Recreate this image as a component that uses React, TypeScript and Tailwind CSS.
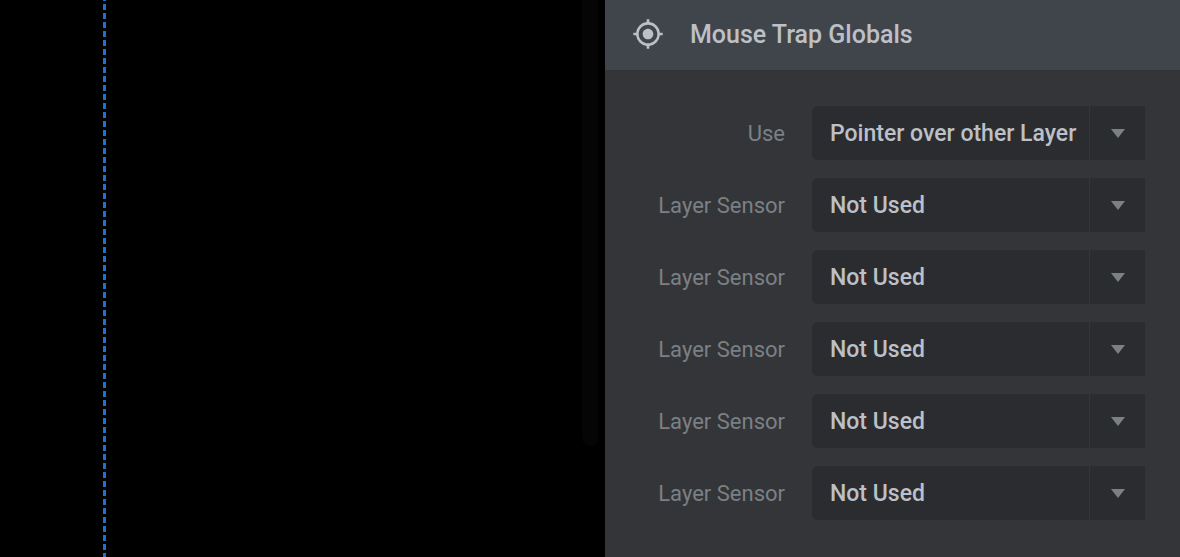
import { useState } from 'react';
import { MdMyLocation } from 'react-icons/md';

type SelectFieldProps = {
  id: string;
  label: string;
  options: string[];
};

const sources = ['Pointer over other Layer', 'Pointer over Slide', 'Events'];
const layers = ['Not Used', 'Layer 1', 'Layer 2', 'Layer 3'];

const fields: SelectFieldProps[] = [
  { id: 'use', label: 'Use', options: sources },
  { id: 'sensor-1', label: 'Layer Sensor', options: layers },
  { id: 'sensor-2', label: 'Layer Sensor', options: layers },
  { id: 'sensor-3', label: 'Layer Sensor', options: layers },
  { id: 'sensor-4', label: 'Layer Sensor', options: layers },
  { id: 'sensor-5', label: 'Layer Sensor', options: layers },
];

const SelectField = ({ id, label, options }: SelectFieldProps) => {
  const [value, setValue] = useState(options[0]);

  return (
    <div className="flex items-center gap-[27px]">
      <label htmlFor={id} className="flex-1 pt-0.5 text-right text-[22px] leading-8 text-[#7b8085]">
        {label}
      </label>
      <div className="relative w-[333px]">
        <select
          id={id}
          value={value}
          onChange={(event) => setValue(event.target.value)}
          className="block h-[54px] w-full appearance-none rounded-l-md bg-[#2b2c30] pt-0.5 pl-[18px] text-[23px] font-medium text-[#bdc0c7] outline-none"
        >
          {options.map((option) => (
            <option key={option}>{option}</option>
          ))}
        </select>
        <span className="pointer-events-none absolute inset-y-0 right-0 flex w-14 items-center justify-center border-l border-[#34353a]">
          <svg viewBox="0 0 14 9" className="h-[9px] w-3.5 fill-[#7b8084]" aria-hidden="true">
            <path d="M0 0h14L7 9z" />
          </svg>
        </span>
      </div>
    </div>
  );
};

const Canvas = () => (
  <main className="flex flex-1 justify-between bg-black pr-[7px] pl-[103px]">
    {/* vertical guide */}
    <div className="w-[3px] bg-[repeating-linear-gradient(to_bottom,#1d72d8_0px,#1d72d8_1px,transparent_1px,transparent_4px,#1d72d8_4px,#1d72d8_9px)]" />
    {/* scrollbar thumb */}
    <div className="h-[80vh] w-4 rounded-b-lg bg-[#050505]" />
  </main>
);

const App = () => (
  <div className="flex min-h-screen bg-black font-[Roboto,sans-serif]">
    <Canvas />
    <aside className="w-[575px] bg-[#343538]">
      <header className="flex h-[70px] items-center gap-[26px] bg-[#40454b] pb-0.5 pl-[27px] text-[#bdc0c7]">
        <MdMyLocation className="size-8" aria-hidden="true" />
        <h2 className="pt-0.5 text-[25px] leading-8 font-medium">Mouse Trap Globals</h2>
      </header>
      <form className="flex flex-col gap-[18px] py-9 pr-[35px] pl-9">
        {fields.map((field) => (
          <SelectField key={field.id} {...field} />
        ))}
      </form>
    </aside>
  </div>
);

export default App;
